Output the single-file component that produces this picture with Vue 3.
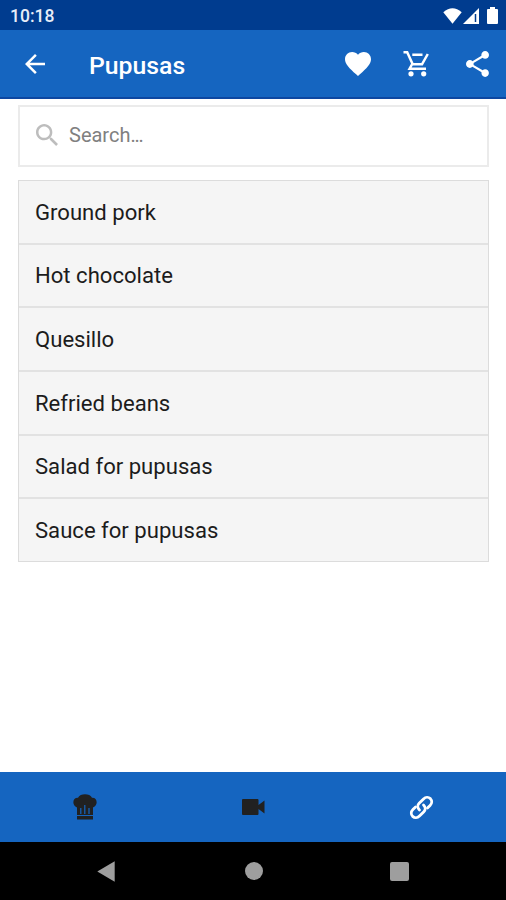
<script setup>
const items = [
  'Ground pork',
  'Hot chocolate',
  'Quesillo',
  'Refried beans',
  'Salad for pupusas',
  'Sauce for pupusas',
]
</script>

<template>
  <div class="screen">
    <div class="status">
      <span class="time">10:18</span>
      <svg class="wifi" viewBox="0 0 19 16"><path d="M.3 4.2Q9.500-3.800 18.700 4.200L9.500 15.700Z" /></svg>
      <svg class="signal" viewBox="0 0 16 16"><path d="M0 16 16 0V16Z" /><path class="gap" d="M12.500 6V14" /></svg>
      <svg class="battery" viewBox="0 0 11 17"><path d="M3 0H8V2H10Q11 2 11 3V16Q11 17 10 17H1Q0 17 0 16V3Q0 2 1 2H3Z" /></svg>
    </div>

    <header class="appbar">
      <svg class="back" viewBox="4 4 16 16"><path d="M20 11H7.830l5.590-5.590L12 4l-8 8 8 8 1.410-1.410L7.830 13H20v-2z" /></svg>
      <h1>Pupusas</h1>
      <svg class="heart" viewBox="2 3 20 18.350" preserveAspectRatio="none"><path d="m12 21.350-1.450-1.320C5.400 15.360 2 12.280 2 8.500 2 5.420 4.420 3 7.500 3c1.740 0 3.410.810 4.500 2.090C13.090 3.810 14.760 3 16.500 3 19.580 3 22 5.420 22 8.500c0 3.780-3.400 6.860-8.550 11.540L12 21.350z" /></svg>
      <svg class="cart" viewBox="0 0 26 26">
        <path class="line" d="M.5 1.300H4.200L9.700 13.300H19L24.800 3M9.200 13 6.600 17.700H23M9.300 3.800H19.500" />
        <circle cx="8" cy="22.800" r="2.600" /><circle cx="20.700" cy="22.800" r="2.600" />
      </svg>
      <svg class="share" viewBox="3 2 18 20" preserveAspectRatio="none"><path d="M18 16.080c-.760 0-1.440.300-1.960.770L8.910 12.700c.050-.230.090-.460.090-.700s-.040-.470-.090-.700l7.050-4.110c.540.500 1.250.810 2.040.810 1.660 0 3-1.340 3-3s-1.340-3-3-3-3 1.340-3 3c0 .240.040.470.090.700L8.040 9.810C7.500 9.310 6.790 9 6 9c-1.660 0-3 1.340-3 3s1.340 3 3 3c.790 0 1.500-.310 2.040-.810l7.120 4.160c-.050.210-.080.430-.080.650 0 1.610 1.310 2.920 2.920 2.920s2.920-1.310 2.920-2.920-1.310-2.920-2.920-2.920z" /></svg>
    </header>

    <main>
      <div class="search">
        <svg viewBox="3 3 17.500 17.500"><path d="M15.500 14h-.790l-.280-.270C15.410 12.590 16 11.110 16 9.500 16 5.910 13.090 3 9.500 3S3 5.910 3 9.500 5.910 16 9.500 16c1.610 0 3.090-.590 4.230-1.570l.270.280v.790l5 4.990L20.490 19l-4.990-5zm-6 0C7.010 14 5 11.990 5 9.500S7.010 5 9.500 5 14 7.010 14 9.500 11.990 14 9.500 14z" /></svg>
        <span class="hint">Search<span class="dots">...</span></span>
      </div>
      <ul>
        <li v-for="item in items" :key="item"><span>{{ item }}</span></li>
      </ul>
    </main>

    <nav class="tabs">
      <div>
        <svg class="chef" viewBox="0 0 24 26">
          <path d="M4 13.500C-1.500 11-.5 3.500 5 3.800 7-.8 17-.8 19 3.800 24.500 3.500 25.500 11 20 13.500V21H4Z" />
          <path class="pleat" d="M7.800 14V20M11.800 11V20M16 14V20" />
          <path d="M4 22H20V25.500H4Z" />
        </svg>
      </div>
      <div>
        <svg class="video" viewBox="0 0 23 16"><path d="M1 0H15.500Q16.500 0 16.500 1V6L22.500 1.500V14.500L16.500 10V15Q16.500 16 15.500 16H1Q0 16 0 15V1Q0 0 1 0Z" /></svg>
      </div>
      <div>
        <svg class="link" viewBox="0 0 24 24">
          <path d="M10.200 14.200C8.300 12.300 8.300 9.900 9.900 8.300L13.800 4.400C15.700 2.500 18.200 2.500 19.900 4.100 21.500 5.800 21.500 8.300 19.600 10.200L17.300 12.500" />
          <path d="M13.800 9.800C15.700 11.700 15.700 14.100 14.100 15.700L10.200 19.600C8.300 21.500 5.800 21.500 4.100 19.900 2.500 18.200 2.500 15.700 4.400 13.800L6.700 11.500" />
        </svg>
      </div>
    </nav>

    <footer class="system">
      <svg class="sys-back" viewBox="0 0 18 21"><path d="M.3 10.500 17.700.2V20.800Z" /></svg>
      <span class="home"></span>
      <span class="recent"></span>
    </footer>
  </div>
</template>

<style>
body {
  margin: 0;
}
</style>

<style scoped>
.screen {
  display: flex;
  flex-direction: column;
  width: 506px;
  height: 900px;
  overflow: hidden;
  background: #fff;
  font-family: Roboto, sans-serif;
}
svg {
  display: block;
  flex: none;
  fill: #fff;
}
.status {
  display: flex;
  align-items: center;
  box-sizing: border-box;
  height: 30px;
  padding: 1px 8px 0 10px;
  background: #003c8f;
}
.time {
  flex: 1;
  color: #e8edf8;
  font-size: 17.500px;
  font-weight: 500;
}
.wifi {
  width: 19px;
  height: 16px;
}
.signal {
  width: 16px;
  height: 16px;
  margin: 0 8px 0 1px;
}
.gap {
  stroke: #003c8f;
  stroke-width: 1.500;
}
.battery {
  width: 11px;
  height: 17px;
}
.appbar {
  display: flex;
  align-items: center;
  box-sizing: border-box;
  height: 69px;
  padding: 0 17px 0 25px;
  border-bottom: 2px solid #0d47a1;
  background: #1565c0;
}
.back {
  width: 20px;
  height: 20px;
}
h1 {
  flex: 1;
  margin: 4px 0 0 44px;
  color: #fff;
  font-size: 24.800px;
  font-weight: 500;
  line-height: 30px;
}
.heart {
  width: 26px;
  height: 24px;
}
.cart {
  width: 26px;
  height: 26px;
  margin: 0 37px 0 32px;
}
.line {
  fill: none;
  stroke: #fff;
  stroke-width: 2.500;
}
.share {
  width: 23px;
  height: 26px;
}
main {
  flex: 1;
  padding: 6px 17px 0 18px;
}
.search {
  display: flex;
  align-items: center;
  gap: 11px;
  box-sizing: border-box;
  height: 62px;
  padding: 0 0 2px 16px;
  border: 2px solid #ebebeb;
  color: #808080;
  font-size: 20px;
}
.hint {
  line-height: 24px;
}
.dots {
  letter-spacing: -1.200px;
}
.search svg {
  width: 22px;
  height: 22px;
  fill: #bdbdbd;
}
ul {
  margin: 13px 0 0;
  padding: 0;
  border: 1px solid #dcdcdc;
  background: #f5f5f5;
  list-style: none;
}
li {
  display: flex;
  align-items: center;
  box-sizing: border-box;
  height: 63.670px;
  padding: 0 0 0 16px;
  border-bottom: 2px solid #e2e2e2;
  color: #1c1c1c;
  font-size: 22.100px;
}
li:last-child {
  height: 62px;
  border-bottom: 0;
}
.tabs {
  display: grid;
  grid-template-columns: repeat(3, 1fr);
  place-items: center;
  height: 70px;
  padding-left: 1px;
  background: #1565c0;
}
.chef {
  width: 24px;
  height: 26px;
  fill: #212121;
}
.pleat {
  stroke: #1565c0;
  stroke-width: 1.200;
}
.video {
  width: 23px;
  height: 16px;
  fill: #212121;
}
.link {
  width: 27px;
  height: 27px;
  fill: none;
  stroke: #fff;
  stroke-width: 2.500;
  stroke-linecap: round;
}
.system {
  display: flex;
  align-items: center;
  height: 58px;
  padding-left: 97px;
  background: #000;
}
.sys-back {
  width: 18px;
  height: 21px;
  fill: #9e9e9e;
}
.home {
  width: 18px;
  height: 18px;
  margin: 0 126px 0 130px;
  border-radius: 50%;
  background: #9e9e9e;
}
.recent {
  width: 19px;
  height: 19px;
  margin-left: 1px;
  border-radius: 2px;
  background: #9e9e9e;
}
</style>
